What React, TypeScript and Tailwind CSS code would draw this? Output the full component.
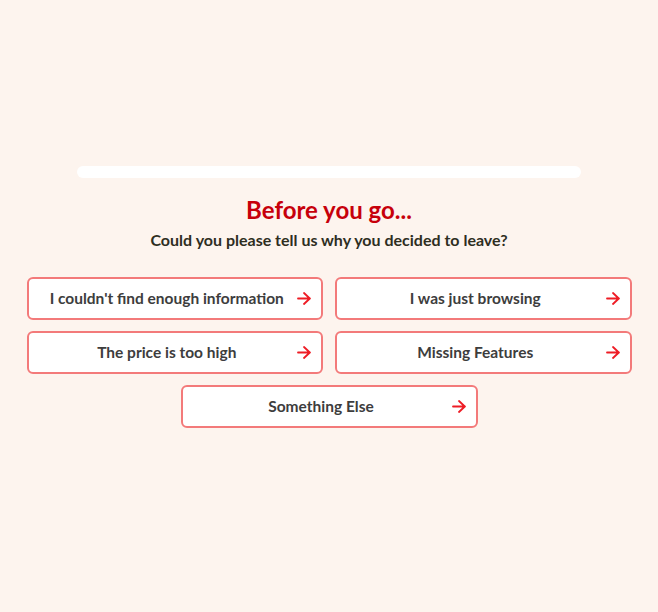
import React from 'react';

const reasons = [
  "I couldn't find enough information",
  'I was just browsing',
  'The price is too high',
  'Missing Features',
];

function Arrow() {
  return (
    <svg width="14" height="13" viewBox="0 0 14 13" fill="none" className="shrink-0">
      <path d="M1 6.5h12M7 1l5.8 5.5L7 12" stroke="#ee1c25" strokeWidth="1.8" strokeLinecap="round" strokeLinejoin="round" />
    </svg>
  );
}

function ReasonButton({ label, className = '' }: { label: string; className?: string }) {
  return (
    <button
      className={`flex h-[43px] items-center gap-2 rounded-[6px] border-2 border-[#f37a7a] bg-white pl-4 pr-[10px] ${className}`}
    >
      <span className="flex-1 text-center text-[15.5px] font-bold text-[#3d3d3d]">{label}</span>
      <Arrow />
    </button>
  );
}

export default function App() {
  return (
    <div className="min-h-[612px] bg-[#fdf4ee] pt-[166px] font-['Lato',sans-serif]">
      {/* progress track */}
      <div className="mx-auto h-[12px] w-[504px] rounded-full bg-white" />

      <h1 className="mt-[17px] text-center text-[24px] font-bold leading-[30px] text-[#c7000b]">Before you go...</h1>
      <p className="mt-[4px] text-center text-[16px] font-bold leading-[22px] text-[#2e2e1f]">
        Could you please tell us why you decided to leave?
      </p>

      <div className="mx-auto mt-[26px] w-[605px]">
        <div className="grid grid-cols-2 gap-x-[12px] gap-y-[11px]">
          {reasons.map((r) => (
            <ReasonButton key={r} label={r} />
          ))}
        </div>
        <div className="mt-[11px] flex justify-center">
          <ReasonButton label="Something Else" className="w-[297px]" />
        </div>
      </div>
    </div>
  );
}
